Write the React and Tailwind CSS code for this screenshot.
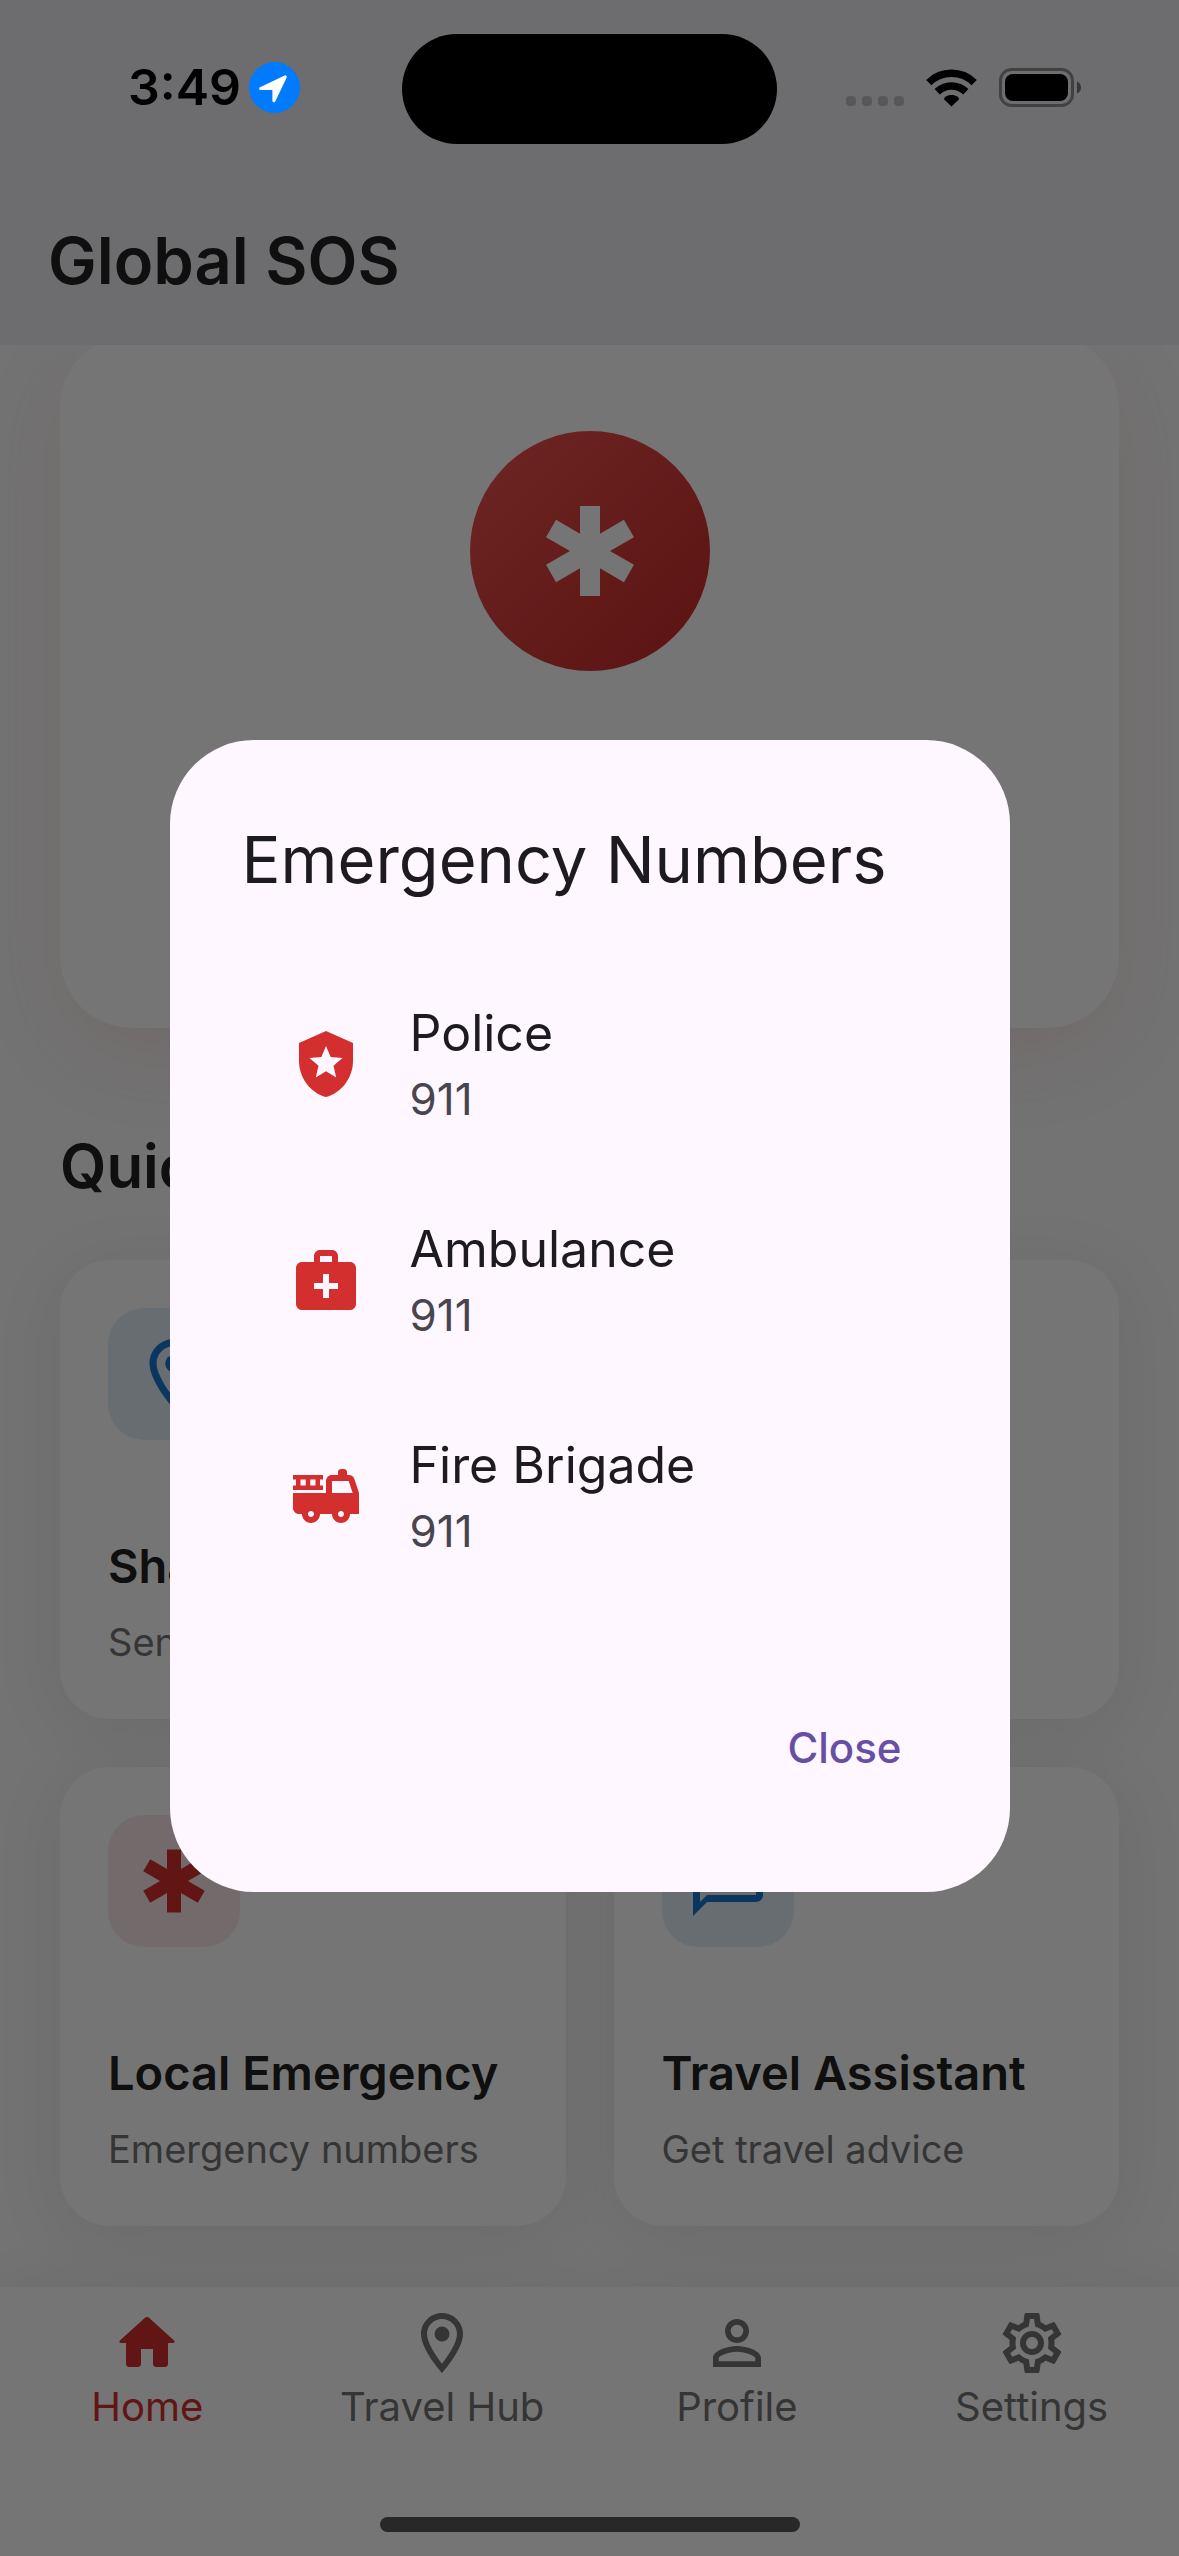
import {
  MdChatBubbleOutline,
  MdEmergency,
  MdFireTruck,
  MdLocalPolice,
  MdMedicalServices,
  MdOutlineLocationOn,
  MdOutlineSettings,
  MdPersonOutline,
} from "react-icons/md";

const contacts = [
  { name: "Police", number: "911", Icon: MdLocalPolice },
  { name: "Ambulance", number: "911", Icon: MdMedicalServices },
  { name: "Fire Brigade", number: "911", Icon: MdFireTruck },
];

const tabs = [
  { label: "Home", Icon: HomeIcon, active: true },
  { label: "Travel Hub", Icon: MdOutlineLocationOn },
  { label: "Profile", Icon: MdPersonOutline },
  { label: "Settings", Icon: MdOutlineSettings },
];

function HomeIcon({ className }) {
  return (
    <svg viewBox="0 0 24 24" fill="currentColor" className={className} aria-hidden="true">
      <path d="M10 19v-5h4v5c0 .55.45 1 1 1h3c.55 0 1-.45 1-1v-7h1.7c.46 0 .68-.57.33-.87L12.67 3.6c-.38-.34-.96-.34-1.34 0l-8.36 7.53c-.34.3-.13.87.33.87H5v7c0 .55.45 1 1 1h3c.55 0 1-.45 1-1z" />
    </svg>
  );
}

function LocationBadge() {
  return (
    <svg viewBox="0 0 51 51" className="size-[51px]" aria-hidden="true">
      <circle cx="25.5" cy="25.5" r="25.5" fill="#007aff" />
      <path
        d="M36.3 14.800 24.900 38.800V26.500H11.600Z"
        fill="#fff"
        stroke="#fff"
        strokeWidth="3"
        strokeLinejoin="round"
      />
    </svg>
  );
}

function WifiIcon() {
  return (
    <svg viewBox="0 0 51 38" className="h-[38px] w-[51px]" aria-hidden="true">
      <g fill="none" stroke="#000" strokeWidth="7.5">
        <path d="M2.8 13.6a32.5 32.5 0 0 1 45.4 0" />
        <path d="M11.2 22.8a20.5 20.5 0 0 1 28.6 0" />
      </g>
      <path d="M25.5 37.5 18 30.2c0-2.6 4-4.2 7.5-4.2s7.500 1.600 7.500 4.200z" />
    </svg>
  );
}

function BatteryIcon() {
  return (
    <svg viewBox="0 0 82 39" className="h-[39px] w-[82px]" aria-hidden="true">
      <rect x="1.500" y="1.500" width="72" height="36" rx="11" fill="none" stroke="#000" strokeOpacity=".4" strokeWidth="3" />
      <rect x="6" y="6" width="63" height="27" rx="8" />
      <path d="M78 13.500c2.500.9 4 3.200 4 6s-1.500 5.100-4 6z" fillOpacity=".5" />
    </svg>
  );
}

function StatusBar() {
  return (
    <div className="relative z-20 grid h-[177px] grid-cols-[1fr_auto_1fr] items-start">
      <div className="flex items-center gap-2 justify-self-end pt-[62px] pr-[102px]">
        <span className="text-[50px] leading-[51px] font-semibold text-black">3:49</span>
        <LocationBadge />
      </div>
      <div className="mt-[34px] h-[110px] w-[375px] rounded-full bg-black" />
      <div className="flex items-center pt-[68px] pl-[69px]">
        <div className="flex gap-[6px] pt-[27px]">
          <i className="size-[10px] rounded bg-[#58585a]" />
          <i className="size-[10px] rounded bg-[#58585a]" />
          <i className="size-[10px] rounded bg-[#58585a]" />
          <i className="size-[10px] rounded bg-[#58585a]" />
        </div>
        <div className="ml-[22px]">
          <WifiIcon />
        </div>
        <div className="ml-[22px]">
          <BatteryIcon />
        </div>
      </div>
    </div>
  );
}

function ActionCard({ title, subtitle, Icon, tone }) {
  return (
    <button
      type="button"
      className="flex h-[459px] flex-col items-start justify-between rounded-[50px] bg-white p-12 text-left shadow-[0_12px_72px_rgba(0,0,0,0.08)]"
    >
      {Icon && (
        <span className={`rounded-[36px] p-6 ${tone}`}>
          <Icon className="size-[84px]" />
        </span>
      )}
      {title && (
        <span className="flex flex-col gap-3 whitespace-nowrap">
          <span className="text-[47px] leading-[72px] font-semibold text-[#212121]">{title}</span>
          <span className="text-[38px] leading-[57px] text-[#757575]">{subtitle}</span>
        </span>
      )}
    </button>
  );
}

function EmergencyDialog() {
  return (
    <div className="fixed inset-0 z-10 flex items-center justify-center bg-black/54 px-12 pt-[177px] pb-[102px]">
      <div
        role="dialog"
        aria-modal="true"
        aria-labelledby="dialog-title"
        className="w-[840px] max-w-full rounded-[84px] bg-[#fef7ff] p-[72px]"
      >
        <h2 id="dialog-title" className="text-[65px] leading-[96px] whitespace-nowrap text-[#1d1b20]">
          Emergency Numbers
        </h2>
        <ul className="mt-12">
          {contacts.map(({ name, number, Icon }) => (
            <li key={name}>
              <button type="button" className="flex h-[216px] w-full items-center gap-12 px-12 text-left">
                <Icon className="size-[72px] text-[#d32f2f]" />
                <span className="flex flex-col">
                  <span className="text-[50px] leading-[70px] text-[#1d1b20]">{name}</span>
                  <span className="text-[44px] leading-[62px] text-[#49454f]">{number}</span>
                </span>
              </button>
            </li>
          ))}
        </ul>
        <div className="mt-[72px] flex justify-end">
          <button type="button" className="h-36 rounded-full px-9 text-[42px] leading-[60px] font-medium text-[#6750a4]">
            Close
          </button>
        </div>
      </div>
    </div>
  );
}

export default function App() {
  return (
    <div className="flex min-h-screen flex-col bg-[#fafafa] font-['Inter','Liberation_Sans',sans-serif]">
      <header className="bg-[#eeeef2]">
        <StatusBar />
        <div className="flex h-[168px] items-center px-12">
          <h1 className="text-[65px] leading-[84px] font-semibold text-[#212121]">Global SOS</h1>
        </div>
      </header>

      <main className="flex-1 overflow-hidden px-[60px] pb-[60px]">
        <section className="-mt-[10px] flex h-[693px] justify-center rounded-[72px] bg-white pt-24 shadow-[0_24px_90px_rgba(211,47,47,0.1)]">
          <button
            type="button"
            aria-label="SOS"
            className="flex size-60 items-center justify-center rounded-full bg-linear-to-br from-[#ef5350] to-[#c62828]"
          >
            <MdEmergency className="size-[120px] text-white" />
          </button>
        </section>

        <h2 className="mt-24 text-[60px] leading-[84px] font-semibold text-[#212121]">Quick Actions</h2>
        <div className="mt-[52px] grid grid-cols-2 gap-12">
          <ActionCard
            title="Share"
            subtitle="Send your location"
            Icon={MdOutlineLocationOn}
            tone="bg-[#e3eef6] text-[#1976d2]"
          />
          <ActionCard />
          <ActionCard
            title="Local Emergency"
            subtitle="Emergency numbers"
            Icon={MdEmergency}
            tone="bg-[#fbe9ea] text-[#d32f2f]"
          />
          <ActionCard
            title="Travel Assistant"
            subtitle="Get travel advice"
            Icon={MdChatBubbleOutline}
            tone="bg-[#e3eef6] text-[#1976d2]"
          />
        </div>
      </main>

      <nav className="relative flex flex-col items-center bg-white pt-5 shadow-[0_-6px_48px_rgba(0,0,0,0.05)]">
        <div className="grid w-full grid-cols-4">
          {tabs.map(({ label, Icon, active }) => (
            <a
              key={label}
              href="#"
              aria-current={active ? "page" : undefined}
              className={`flex flex-col items-center ${active ? "text-[#d32f2f]" : "text-[#757575]"}`}
            >
              <Icon className="size-[72px]" />
              <span className="text-[40px] leading-[56px]">{label}</span>
            </a>
          ))}
        </div>
        <div className="mt-[82px] mb-6 h-[15px] w-[420px] rounded-full bg-[#585858]" />
      </nav>

      <EmergencyDialog />
    </div>
  );
}
